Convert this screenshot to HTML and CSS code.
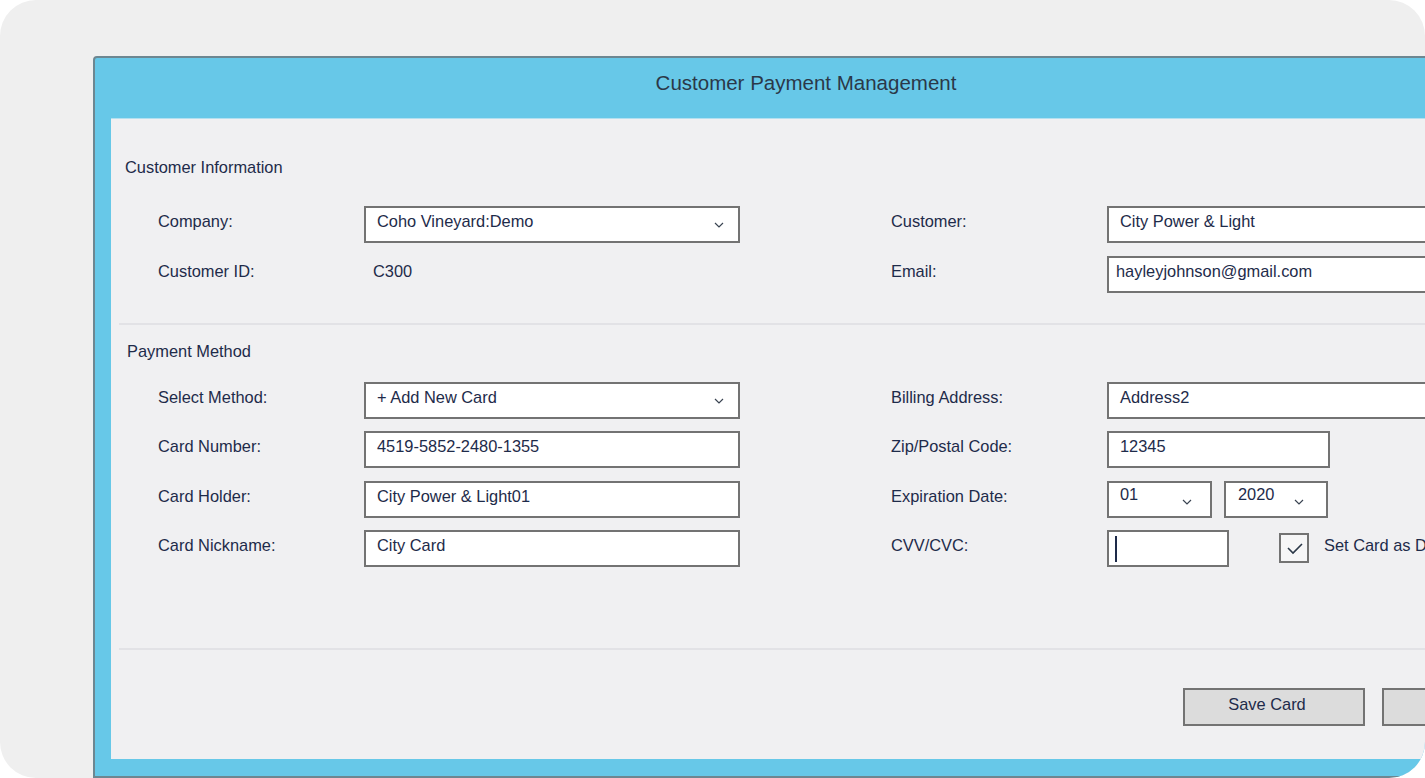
FILE: index.html
```html
<!DOCTYPE html>
<html lang="en">
<head>
  <meta charset="UTF-8">
  <title>Customer Payment Management</title>
  <link rel="stylesheet" href="styles.css">
</head>
<body>
  <div class="screen">
    <div class="window">
      <div class="title-bar">Customer Payment Management</div>
      <div class="panel">

        <section class="group group-customer">
          <h2>Customer Information</h2>
          <div class="fields">
            <label>Company:</label>
            <div class="box select">
              <span>Coho Vineyard:Demo</span>
              <svg class="chev" width="10" height="6" viewBox="0 0 10 6"><path d="M1 1l4 4 4-4"/></svg>
            </div>
            <label>Customer:</label>
            <div class="box">City Power &amp; Light</div>

            <label>Customer ID:</label>
            <div class="value">C300</div>
            <label>Email:</label>
            <div class="box box-email">hayleyjohnson@gmail.com</div>
          </div>
        </section>

        <section class="group group-payment">
          <h2>Payment Method</h2>
          <div class="fields">
            <label>Select Method:</label>
            <div class="box select">
              <span>+ Add New Card</span>
              <svg class="chev" width="10" height="6" viewBox="0 0 10 6"><path d="M1 1l4 4 4-4"/></svg>
            </div>
            <label>Billing Address:</label>
            <div class="box">Address2</div>

            <label>Card Number:</label>
            <div class="box">4519-5852-2480-1355</div>
            <label>Zip/Postal Code:</label>
            <div class="box box-zip">12345</div>

            <label>Card Holder:</label>
            <div class="box">City Power &amp; Light01</div>
            <label>Expiration Date:</label>
            <div class="expiry">
              <div class="box select small month">
                <span>01</span>
                <svg class="chev" width="10" height="6" viewBox="0 0 10 6"><path d="M1 1l4 4 4-4"/></svg>
              </div>
              <div class="box select small year">
                <span>2020</span>
                <svg class="chev" width="10" height="6" viewBox="0 0 10 6"><path d="M1 1l4 4 4-4"/></svg>
              </div>
            </div>

            <label>Card Nickname:</label>
            <div class="box">City Card</div>
            <label>CVV/CVC:</label>
            <div class="cvv-row">
              <div class="box box-cvv"><span class="caret"></span></div>
              <span class="checkbox">
                <svg width="26" height="26" viewBox="0 0 26 26"><path d="M7 13l5 5 9-9"/></svg>
              </span>
              <span class="check-label">Set Card as Default</span>
            </div>
          </div>
        </section>

        <div class="actions">
          <button>Save Card</button>
          <button></button>
        </div>

      </div>
    </div>
  </div>
</body>
</html>
```

FILE: styles.css
```css
* {
  box-sizing: border-box;
}
body {
  margin: 0;
  background: #fff;
  color: #1e2b4a;
  font-family: "Liberation Sans", Arial, sans-serif;
  font-size: 16.4px;
}
.screen {
  width: 1425px;
  height: 778px;
  background: #efefef;
  border-radius: 36px;
  overflow: hidden;
  padding: 56px 0 0 93px;
}
.window {
  width: 1426px;
  height: 722px;
  background: #67c8e8;
  border: 2px solid #6d8791;
  border-radius: 4px 0 0 0;
  display: flex;
  flex-direction: column;
}
.title-bar {
  height: 60px;
  padding-top: 14px;
  line-height: 22px;
  text-align: center;
  font-size: 20.5px;
  color: #2b3848;
}
.panel {
  flex: 1;
  margin: 0 16px 17px 16px;
  background: #f0f0f2;
  border-top: 1px solid #b4e0f0;
}
.group {
  margin-left: 8px;
  border-bottom: 2px solid #e2e2e6;
}
.group h2 {
  margin: 0 0 30px 6px;
  font-size: 16.4px;
  font-weight: normal;
  line-height: 20px;
}
.group-customer {
  padding: 38px 0 30px;
}
.group-customer h2 {
  margin-bottom: 29px;
}
.group-payment {
  padding: 16px 0 81px;
}
.group-payment h2 {
  margin: 0 0 21px 8px;
}
.fields {
  margin-left: 39px;
  display: grid;
  grid-template-columns: 206px 527px 216px 400px;
  grid-auto-rows: 37px;
  row-gap: 13px;
  align-items: start;
}
.group-payment .fields {
  row-gap: 12.3px;
}
.fields label,
.fields .value {
  padding-top: 5px;
  line-height: 20px;
}
.fields .value {
  padding-left: 9px;
}
.box {
  width: 376px;
  height: 37px;
  background: #fff;
  border: 2px solid #737373;
  padding: 3px 10px 0 11px;
  line-height: 20px;
  white-space: nowrap;
}
.box-email {
  padding-left: 7px;
}
.box-zip {
  width: 223px;
}
.select {
  display: flex;
  justify-content: space-between;
  align-items: center;
  padding-top: 0;
  padding-right: 14px;
}
.select span {
  align-self: flex-start;
  padding-top: 3px;
}
.chev path {
  fill: none;
  stroke: #3a4452;
  stroke-width: 1.2;
}
.expiry {
  display: flex;
  gap: 12px;
}
.small {
  padding-right: 18px;
}
.small span {
  padding-top: 1px;
}
.small .chev {
  margin-top: 6px;
}
.month {
  width: 105px;
}
.year {
  width: 104px;
  padding-left: 12px;
  padding-right: 22px;
}
.cvv-row {
  display: flex;
  align-items: flex-start;
}
.box-cvv {
  width: 122px;
  padding: 4px 0 0 6px;
}
.caret {
  display: block;
  width: 2px;
  height: 26px;
  background: #1e2b4a;
}
.checkbox {
  width: 30px;
  height: 30px;
  margin: 3px 0 0 50px;
  border: 2px solid #737373;
  background: #f6f6f7;
  display: flex;
  align-items: center;
  justify-content: center;
}
.checkbox path {
  fill: none;
  stroke: #2b3848;
  stroke-width: 1.6;
}
.check-label {
  margin-left: 15px;
  padding-top: 5px;
  line-height: 20px;
  white-space: nowrap;
}
.actions {
  display: flex;
  gap: 17px;
  padding: 38px 0 0 1072px;
}
.actions button {
  flex: none;
  width: 182px;
  height: 38px;
  background: #dcdcdc;
  border: 2px solid #737373;
  border-radius: 0;
  padding: 0 14px 5px 0;
  color: #1e2b4a;
  font-family: "Liberation Sans", Arial, sans-serif;
  font-size: 16.4px;
}
```
